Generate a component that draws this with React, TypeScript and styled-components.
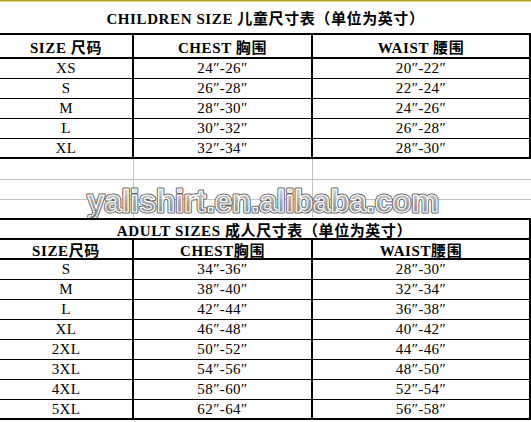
import React from 'react';
import styled, { createGlobalStyle } from 'styled-components';

const GlobalStyle = createGlobalStyle`
  html, body {
    margin: 0;
    padding: 0;
    background: #ffffff;
  }
`;

const Sheet = styled.div`
  width: 531px;
  height: 422px;
  overflow: hidden;
  display: flex;
  flex-direction: column;
  background: #ffffff;
  color: #000000;
`;

const SelectedStrip = styled.div`
  height: 2px;
  box-sizing: border-box;
  background: #f4dc78;
  border-top: 1px solid #b89a2c;
`;

const Caption = styled.div<{ $boxed?: boolean }>`
  height: ${({ $boxed }) => ($boxed ? '18px' : '31px')};
  display: flex;
  align-items: center;
  justify-content: center;
  font-family: "Liberation Serif", "Noto Sans CJK SC", serif;
  font-size: 15px;
  font-weight: 700;
  letter-spacing: 0.6px;
  white-space: pre;
  border-top: ${({ $boxed }) => ($boxed ? '2px solid #000' : 'none')};
  border-right: ${({ $boxed }) => ($boxed ? '2px solid #000' : 'none')};
`;

const Grid = styled.div`
  display: grid;
  grid-template-columns: 132px 179px 1fr;
  border-top: 2px solid #000;
  border-right: 2px solid #000;
  border-bottom: 2px solid #000;
`;

const Cell = styled.div<{ $head?: boolean; $height: number; $line: number }>`
  box-sizing: border-box;
  height: ${({ $height }) => $height}px;
  display: flex;
  align-items: center;
  justify-content: center;
  white-space: pre;
  border-bottom: ${({ $line }) => ($line ? `${$line}px solid #000` : 'none')};
  font-family: "Liberation Serif", "DejaVu Serif", "Noto Sans CJK SC", serif;
  font-size: 15px;
  font-weight: ${({ $head }) => ($head ? 700 : 400)};
  letter-spacing: ${({ $head }) => ($head ? '0.6px' : '0.4px')};

  &:nth-child(3n + 2),
  &:nth-child(3n) {
    border-left: 2px solid #000;
  }
`;

const Gap = styled.div`
  position: relative;
  display: grid;
  grid-template-columns: 133px 179px 1fr;
  grid-template-rows: 21px 20px 18px;
`;

const GapCell = styled.div<{ $ruled?: boolean }>`
  box-sizing: border-box;
  border-bottom: ${({ $ruled }) => ($ruled ? '1px solid #c4c4c4' : 'none')};

  &:nth-child(3n + 2),
  &:nth-child(3n) {
    border-left: 1px solid #c4c4c4;
  }
`;

const Watermark = styled.svg`
  position: absolute;
  left: 0;
  top: 0;
  pointer-events: none;
`;

interface SizeRow {
  size: string;
  chest: string;
  waist: string;
}

const childRows: SizeRow[] = [
  { size: 'XS', chest: '24″-26″', waist: '20″-22″' },
  { size: 'S', chest: '26″-28″', waist: '22″-24″' },
  { size: 'M', chest: '28″-30″', waist: '24″-26″' },
  { size: 'L', chest: '30″-32″', waist: '26″-28″' },
  { size: 'XL', chest: '32″-34″', waist: '28″-30″' },
];

const adultRows: SizeRow[] = [
  { size: 'S', chest: '34″-36″', waist: '28″-30″' },
  { size: 'M', chest: '38″-40″', waist: '32″-34″' },
  { size: 'L', chest: '42″-44″', waist: '36″-38″' },
  { size: 'XL', chest: '46″-48″', waist: '40″-42″' },
  { size: '2XL', chest: '50″-52″', waist: '44″-46″' },
  { size: '3XL', chest: '54″-56″', waist: '48″-50″' },
  { size: '4XL', chest: '58″-60″', waist: '52″-54″' },
  { size: '5XL', chest: '62″-64″', waist: '56″-58″' },
];

interface SizeTableProps {
  title: string;
  boxedTitle?: boolean;
  headers: string[];
  headerHeight: number;
  rows: SizeRow[];
}

const SizeTable: React.FC<SizeTableProps> = ({ title, boxedTitle, headers, headerHeight, rows }) => (
  <>
    <Caption $boxed={boxedTitle}>{title}</Caption>
    <Grid>
      {headers.map(h => (
        <Cell key={h} $head $height={headerHeight} $line={2}>
          {h}
        </Cell>
      ))}
      {rows.map((row, i) => {
        const last = i === rows.length - 1;
        const height = last ? 18 : 20;
        const line = last ? 0 : 1;
        return (
          <React.Fragment key={row.size}>
            <Cell $height={height} $line={line}>{row.size}</Cell>
            <Cell $height={height} $line={line}>{row.chest}</Cell>
            <Cell $height={height} $line={line}>{row.waist}</Cell>
          </React.Fragment>
        );
      })}
    </Grid>
  </>
);

const App: React.FC = () => (
  <Sheet>
    <GlobalStyle />
    <SelectedStrip />
    <SizeTable
      title="CHILDREN SIZE 儿童尺寸表（单位为英寸）"
      headers={['SIZE 尺码', 'CHEST 胸围', 'WAIST 腰围']}
      headerHeight={24}
      rows={childRows}
    />

    <Gap>
      {Array.from({ length: 9 }).map((_, i) => (
        <GapCell key={i} $ruled={i < 6} />
      ))}
      <Watermark width="531" height="59" viewBox="0 0 531 59">
        <defs>
          <linearGradient id="wm" x1="0" y1="0" x2="0" y2="1">
            <stop offset="0" stopColor="#e6e6e6" />
            <stop offset="0.5" stopColor="#a8a8a8" />
            <stop offset="1" stopColor="#7c7c7c" />
          </linearGradient>
        </defs>
        <g fontFamily='"Liberation Sans", Arial, sans-serif' fontWeight="700" fontSize="31" textAnchor="middle">
          <text x="263" y="53" fill="#5e5e5e" stroke="#5e5e5e" strokeWidth="3.2" strokeLinejoin="round">
            yalishirt.en.alibaba.com
          </text>
          <text x="263" y="53" fill="url(#wm)" stroke="#ffffff" strokeWidth="1.2" strokeLinejoin="round">
            yalishirt.en.alibaba.com
          </text>
        </g>
      </Watermark>
    </Gap>

    <SizeTable
      title="ADULT SIZES 成人尺寸表（单位为英寸）"
      boxedTitle
      headers={['SIZE尺码', 'CHEST胸围', 'WAIST腰围']}
      headerHeight={20}
      rows={adultRows}
    />
  </Sheet>
);

export default App;
